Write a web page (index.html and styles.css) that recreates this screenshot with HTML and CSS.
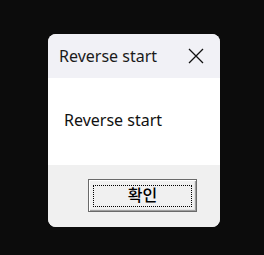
FILE: index.html
```html
<!DOCTYPE html>
<html>
<head>
<meta charset="utf-8">
<link rel="stylesheet" href="styles.css">
</head>
<body>
<div class="dialog">
  <div class="titlebar">
    <span class="title">Reverse start</span>
    <svg class="close" width="16" height="16" viewBox="0 0 16 16"><path d="M1 1 L15 15 M15 1 L1 15" stroke="#111" stroke-width="1.3" fill="none"/></svg>
  </div>
  <div class="content">Reverse start</div>
  <div class="footer">
    <button class="btn"><span class="focus">확인</span></button>
  </div>
</div>
</body>
</html>
```
FILE: styles.css
```css
html, body { margin: 0; padding: 0; }
body {
  background: #0c0c0c;
  width: 264px;
  height: 255px;
  overflow: hidden;
  font-family: "Noto Sans", "Noto Sans CJK KR", sans-serif;
}
.dialog {
  margin: 34px 0 0 48px;
  width: 172px;
  height: 193px;
  border-radius: 8px;
  overflow: hidden;
  display: flex;
  flex-direction: column;
  background: #f0f0f0;
}
.titlebar {
  height: 44px;
  background: #f1f1f6;
  display: flex;
  align-items: center;
  justify-content: space-between;
  padding: 0 16px 0 11px;
}
.title { font-size: 16px; color: #1a1a1a; }
.close { display: block; }
.content {
  background: #fff;
  height: 87px;
  box-sizing: border-box;
  padding: 33px 0 0 16px;
  font-size: 16px;
  color: #111;
  line-height: 19px;
}
.footer {
  flex: 1;
  background: #f0f0f0;
  padding: 14px 0 0 40px;
}
.btn {
  width: 109px;
  height: 33px;
  padding: 4px;
  margin: 0;
  background: #f0f0f0;
  border: 1px solid #6a6a6a;
  box-shadow: inset 1px 1px 0 #fff, inset -1px -1px 0 #a0a0a0, inset -2px -2px 0 #e3e3e3;
  display: flex;
  box-sizing: border-box;
}
.focus {
  flex: 1;
  border: 1px dotted #000;
  font-family: "Noto Sans CJK KR", sans-serif;
  font-size: 16px;
  font-weight: 500;
  line-height: 16px;
  color: #000;
  display: flex;
  align-items: flex-start;
  justify-content: center;
  padding-top: 0;
  margin-top: 1px;
}
```
